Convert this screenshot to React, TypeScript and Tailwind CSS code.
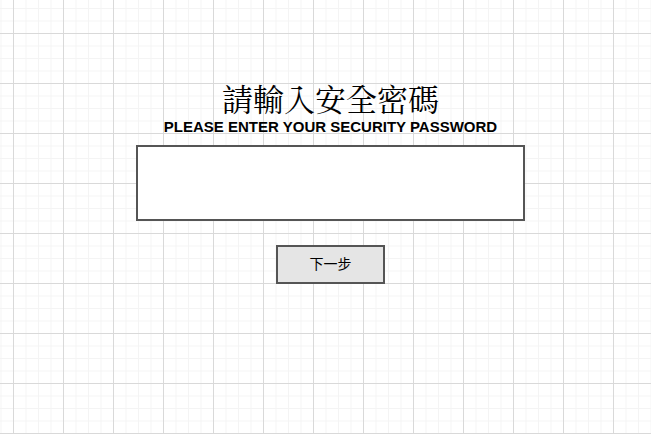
export default function App() {
  return (
    <div className="h-[434px] w-full bg-white bg-[linear-gradient(to_right,#d9d9d9_1px,transparent_1px),linear-gradient(to_bottom,#d9d9d9_1px,transparent_1px),linear-gradient(to_right,#f4f4f4_1px,transparent_1px),linear-gradient(to_bottom,#f4f4f4_1px,transparent_1px)] [background-size:50px_50px,50px_50px,12.5px_12.5px,12.5px_12.5px] [background-position:13px_33px]">
      <div className="flex flex-col items-center pl-[10px] pt-[82px]">
        <h1 className="text-[31px] leading-none text-black font-['Noto_Serif_CJK_TC','Liberation_Serif','Noto_Sans_CJK_TC',serif]">
          請輸入安全密碼
        </h1>
        <p className="mt-[6px] text-[15px] font-bold leading-none text-black font-['Liberation_Sans',Arial,sans-serif]">
          PLEASE ENTER YOUR SECURITY PASSWORD
        </p>
        <input
          type="password"
          className="mt-[11px] h-[76px] w-[389px] border-2 border-[#555555] bg-white outline-none"
        />
        <button
          type="button"
          className="mt-[24px] h-[39px] w-[109px] border-2 border-[#555555] bg-[#e5e5e5] text-[14px] text-black font-['Liberation_Sans','Noto_Sans_CJK_TC',sans-serif]"
        >
          下一步
        </button>
      </div>
    </div>
  );
}
